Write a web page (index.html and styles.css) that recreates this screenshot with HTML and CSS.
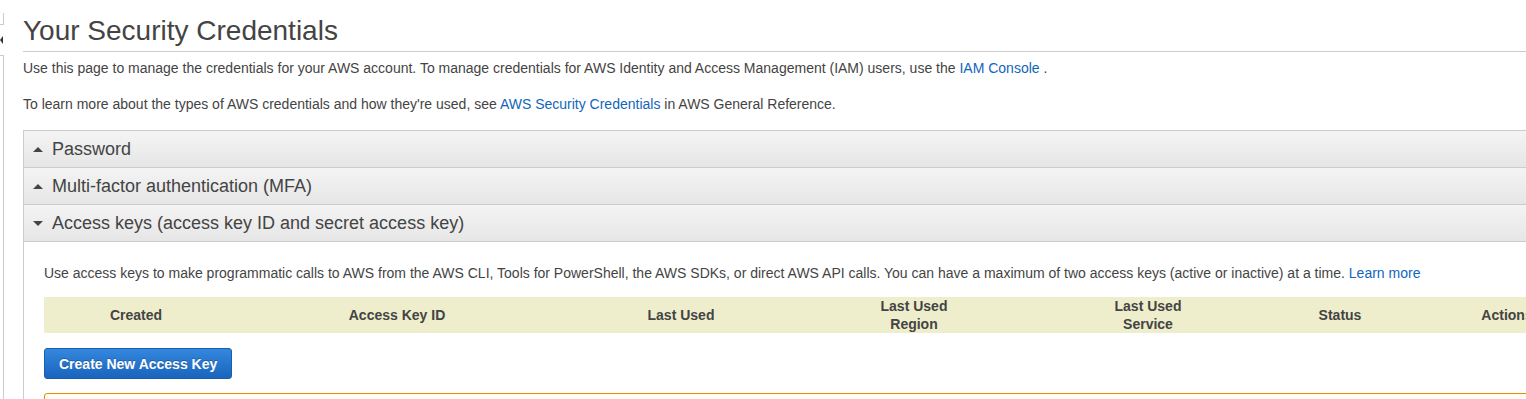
FILE: index.html
```html
<!DOCTYPE html>
<html lang="en">
<head>
    <meta charset="UTF-8">
    <title>Your Security Credentials</title>
    <link rel="stylesheet" href="styles.css">
</head>
<body>
    <!-- Sidebar yang sedang diciutkan -->
    <div class="sidebar">
        <div class="sidebar-top"></div>
        <div class="sidebar-toggle"></div>
        <div class="sidebar-bottom"></div>
    </div>

    <!-- Konten utama -->
    <div class="main">
        <h1 class="page-title">Your Security Credentials</h1>
        <p class="intro">Use this page to manage the credentials for your AWS account. To manage credentials for AWS Identity and Access Management (IAM) users, use the <a href="#">IAM Console</a> .</p>
        <p class="intro">To learn more about the types of AWS credentials and how they're used, see <a href="#">AWS Security Credentials</a> in AWS General Reference.</p>

        <div class="accordion">
            <div class="section-header">
                <span class="arrow up"></span>
                <span>Password</span>
            </div>
            <div class="section-header">
                <span class="arrow up"></span>
                <span>Multi-factor authentication (MFA)</span>
            </div>
            <div class="section-header">
                <span class="arrow down"></span>
                <span>Access keys (access key ID and secret access key)</span>
            </div>
            <div class="section-body">
                <p class="section-text">Use access keys to make programmatic calls to AWS from the AWS CLI, Tools for PowerShell, the AWS SDKs, or direct AWS API calls. You can have a maximum of two access keys (active or inactive) at a time. <a href="#">Learn more</a></p>

                <div class="keys-table">
                    <div class="col col-created">Created</div>
                    <div class="col col-id">Access Key ID</div>
                    <div class="col col-used">Last Used</div>
                    <div class="col col-region">Last Used<br>Region</div>
                    <div class="col col-service">Last Used<br>Service</div>
                    <div class="col col-status">Status</div>
                    <div class="col col-actions">Actions</div>
                </div>

                <button class="btn-primary">Create New Access Key</button>

                <div class="notice"></div>
            </div>
        </div>
    </div>
</body>
</html>
```

FILE: styles.css
```css
* {
    margin: 0;
    padding: 0;
    box-sizing: border-box;
}

body {
    display: flex;
    height: 399px;
    overflow: hidden;
    background-color: #ffffff;
    font-family: "Liberation Sans", Arial, sans-serif;
    color: #444444;
}

a {
    color: #1166bb;
    text-decoration: none;
}

/* Sidebar kiri (ciut) */
.sidebar {
    display: flex;
    flex-direction: column;
    width: 4px;
    flex-shrink: 0;
}

.sidebar-top {
    margin-top: 13px;
    height: 12px;
    border-right: 1px solid #cccccc;
    border-bottom: 1px solid #cccccc;
}

.sidebar-toggle {
    margin-top: 11px;
    width: 0;
    height: 0;
    border-top: 4px solid transparent;
    border-bottom: 4px solid transparent;
    border-right: 3px solid #333333;
}

.sidebar-bottom {
    margin-top: 11px;
    flex: 1;
    border-right: 1px solid #cccccc;
    border-top: 1px solid #cccccc;
}

/* Area konten */
.main {
    margin-left: 19px;
    width: 1620px;
    flex-shrink: 0;
}

.page-title {
    font-size: 28px;
    font-weight: normal;
    line-height: 32px;
    padding-top: 15px;
    padding-bottom: 4px;
    border-bottom: 1px solid #cccccc;
    color: #444444;
    width: 1503px;
}

.intro {
    font-size: 14px;
    line-height: 16px;
    margin-top: 8px;
}

.intro + .intro {
    margin-top: 20px;
}

/* Accordion */
.accordion {
    margin-top: 18px;
    border-left: 1px solid #cccccc;
    border-top: 1px solid #cccccc;
}

.section-header {
    display: flex;
    align-items: center;
    height: 37px;
    padding-left: 9px;
    font-size: 18px;
    color: #444444;
    background: linear-gradient(#f4f4f4, #e6e6e6);
    border-bottom: 1px solid #cccccc;
}

.arrow {
    width: 0;
    height: 0;
    margin-right: 9px;
    border-left: 5px solid transparent;
    border-right: 5px solid transparent;
}

.arrow.up {
    border-bottom: 5px solid #444444;
}

.arrow.down {
    border-top: 5px solid #444444;
}

.section-body {
    padding: 23px 0 0 20px;
}

.section-text {
    font-size: 14px;
    line-height: 16px;
}

/* Tabel access key */
.keys-table {
    display: grid;
    grid-template-columns: 184px 338px 230px 236px 232px 152px 182px;
    align-items: center;
    margin-top: 16px;
    height: 36px;
    background-color: #eeeecc;
    font-size: 14px;
    font-weight: bold;
    line-height: 18px;
    color: #444444;
}

.col {
    text-align: center;
}

/* Tombol biru */
.btn-primary {
    display: block;
    margin-top: 15px;
    height: 31px;
    padding: 0 14px;
    font-family: "Liberation Sans", Arial, sans-serif;
    font-size: 14px;
    font-weight: bold;
    color: #ffffff;
    background: linear-gradient(#3388dd, #1a64bd);
    border: 1px solid #1a5fae;
    border-radius: 3px;
    text-shadow: 0 -1px 0 rgba(0, 0, 0, 0.25);
    cursor: pointer;
}

/* Kotak peringatan oranye */
.notice {
    margin-top: 14px;
    height: 40px;
    border: 1px solid #e88c00;
    border-radius: 3px 0 0 0;
    background-color: #fffcf3;
}
```
